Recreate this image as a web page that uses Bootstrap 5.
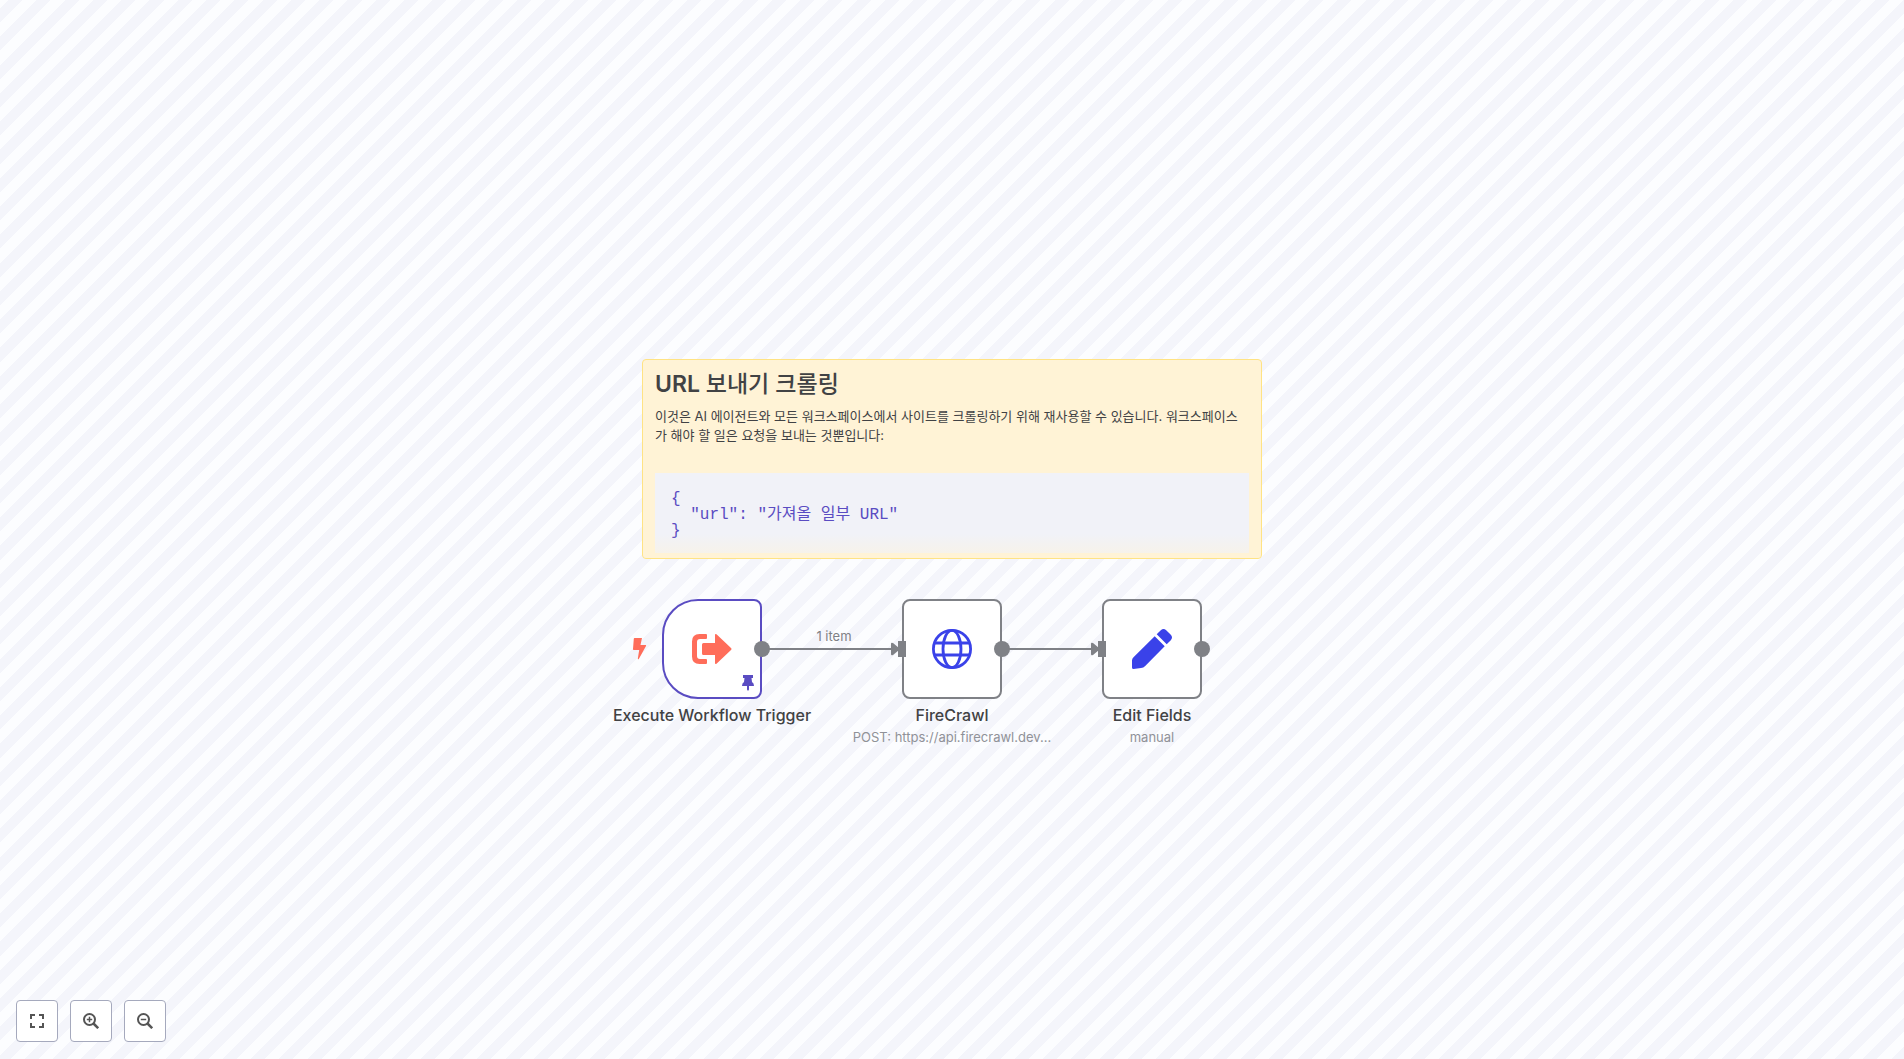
<!DOCTYPE html>
<html lang="ko">
<head>
<meta charset="utf-8">
<meta name="viewport" content="width=device-width, initial-scale=1">
<title>Workflow</title>
<link href="https://cdn.jsdelivr.net/npm/bootstrap@5.3.0/dist/css/bootstrap.min.css" rel="stylesheet">
<style>
  body { font-family: Inter, "Noto Sans CJK KR", sans-serif; color: #414244; }
  .flow-canvas { background: repeating-linear-gradient(135deg, #fcfdff 0 6px, #f4f5fb 6px 16px, #fcfdff 16px 20px); padding-bottom: 1px; }
  .board { width: 620px; height: 340px; }
  .sticky { height: 200px; background: #fff3d6; border: 1px solid #ffe384; border-radius: 4px; padding: 8px 12px 0; }
  .sticky::after { content: ""; position: absolute; inset: auto 0 0 0; height: 24px; background: linear-gradient(180deg, #fff3d600, #fff3d680); }
  .sticky h1 { font-size: 23px; line-height: 32px; font-weight: 600; margin: 0 0 7px; }
  .sticky h1 span { font-weight: 500; }
  .sticky p { font-size: 13px; line-height: 19px; margin: 0 0 28px; word-break: break-all; }
  .sticky pre { height: 80px; margin: 0; padding: 18px 16px 0; background: #f1f2f8; color: #5a4cc2; font: 16px/16px "Liberation Mono", "Noto Sans CJK KR", monospace; overflow: hidden; }
  .flow-node { width: 100px; height: 100px; top: 240px; background: #fff; border: 2px solid #7f8186; border-radius: 8px; }
  .node-trigger { left: 20px; border-color: #5a4cc2; border-radius: 36px 8px 8px 36px; }
  .node-http { left: 260px; }
  .node-edit { left: 460px; }
  .node-text { top: 104px; left: 50%; transform: translateX(-50%); width: 208px; }
  .node-title { font-size: 16px; line-height: 20px; font-weight: 500; }
  .node-sub { font-size: 13px; line-height: 20px; color: #909298; margin-top: 2px; }
  .pin { right: 6px; bottom: 6px; }
  .wires { left: 0; top: 0; overflow: visible; pointer-events: none; }
  .wire-label { left: 120px; width: 144px; top: 267px; font-size: 13px; line-height: 20px; color: #7f8186; }
  .bolt { left: -10px; top: 279px; }
  .canvas-tools { margin: 0 16px 17px; gap: 12px; }
  .tool-btn { width: 42px; height: 42px; border: 1px solid #a5a9bd; border-radius: 4px; background: #fff; color: #555; }
</style>
</head>
<body>
<main class="flow-canvas position-relative vh-100 overflow-hidden d-flex align-items-center justify-content-center">
  <div class="board position-relative">
    <section class="sticky position-relative overflow-hidden">
      <h1>URL <span>보내기 크롤링</span></h1>
      <p>이것은 AI 에이전트와 모든 워크스페이스에서 사이트를 크롤링하기 위해 재사용할 수 있습니다. 워크스페이스<br>가 해야 할 일은 요청을 보내는 것뿐입니다:</p>
      <pre>{
  "url": "가져올 일부 URL"
}</pre>
    </section>

    <svg class="bolt position-absolute" width="15" height="22" viewBox="0 0 15 22" aria-hidden="true"><path fill="#ff6d5a" d="M2.500 0h7.500l-1.500 7H13.700q.7.200.3 1L6.800 21q-.8.800-1-.2L7.200 12H1.700Q.9 12 1 11L1.800.700Q1.900 0 2.500 0Z"/></svg>

    <article class="flow-node node-trigger position-absolute d-flex align-items-center justify-content-center">
      <svg width="40" height="30" viewBox="0 0 40 30" aria-hidden="true"><path fill="#ff6d5a" d="M14 0q1 0 1 1v3q0 1-1 1H8Q5 5 5 8v14q0 3 3 3h6q1 0 1 1v3q0 1-1 1H7.500Q0 30 0 22.500v-15Q0 0 7.500 0ZM24.500.300 39 14q1 1 0 2L24.500 29.700Q23 30.500 23 29v-8H11.500Q10 21 10 19.500v-9Q10 9 11.500 9H23V1q0-1.500 1.500-.7Z"/></svg>
      <svg class="pin position-absolute" width="12" height="16" viewBox="0 0 12 16" aria-hidden="true"><path fill="#5a4cc2" d="M1 0h10v3H9.500l.5 4q2 1 2 4H7v3.500L6 16l-1-1.500V11H0q0-3 2-4l.5-4H1Z"/></svg>
      <div class="node-text position-absolute text-center text-nowrap"><div class="node-title">Execute Workflow Trigger</div></div>
    </article>

    <article class="flow-node node-http position-absolute d-flex align-items-center justify-content-center">
      <svg width="40" height="40" viewBox="0 0 40 40" fill="none" stroke="#3a42e9" stroke-width="2.800" aria-hidden="true"><circle cx="20" cy="20" r="18.600"/><ellipse cx="20" cy="20" rx="9" ry="18.600"/><path d="M2.500 14h35M2.500 26h35"/></svg>
      <div class="node-text position-absolute text-center text-nowrap"><div class="node-title">FireCrawl</div><div class="node-sub">POST: https://api.firecrawl.dev...</div></div>
    </article>

    <article class="flow-node node-edit position-absolute d-flex align-items-center justify-content-center">
      <svg width="40" height="40" viewBox="0 0 40 40" fill="#3a42e9" aria-hidden="true"><path d="M22.700 7.300 32.700 17.300 13.200 37Q11.500 38.800 9 39L1.500 40Q0 40 0 38.500V31.500Q0 29.500 1.500 28.200ZM24.700 5.300 28.800 1.200q2.700-2.400 5.400 0l4.600 4.600q2.400 2.700 0 5.400l-4.100 4.100Z"/></svg>
      <div class="node-text position-absolute text-center"><div class="node-title">Edit Fields</div><div class="node-sub">manual</div></div>
    </article>

    <svg class="wires position-absolute" width="620" height="340" viewBox="0 0 620 340" aria-hidden="true">
      <g fill="#7f8186">
        <path d="M120 289h130v2H120zM360 289h90v2h-90z"/>
        <path d="M249 285q0-2 2-1l6 5q1 1 0 2l-6 5q-2 1-2-1ZM449 285q0-2 2-1l6 5q1 1 0 2l-6 5q-2 1-2-1Z"/>
        <path d="M256 282h8v16h-8zM456 282h8v16h-8z"/>
        <circle cx="120" cy="290" r="8"/><circle cx="360" cy="290" r="8"/><circle cx="560" cy="290" r="8"/>
      </g>
    </svg>
    <div class="wire-label position-absolute text-center">1 item</div>
  </div>

  <div class="canvas-tools position-absolute bottom-0 start-0 d-flex">
    <button type="button" class="tool-btn p-0 d-flex align-items-center justify-content-center" aria-label="Zoom to fit"><svg width="14" height="14" viewBox="0 0 14 14" fill="none" stroke="currentColor" stroke-width="2"><path d="M1 5V1h4M9 1h4v4M13 9v4H9M5 13H1V9"/></svg></button>
    <button type="button" class="tool-btn p-0 d-flex align-items-center justify-content-center" aria-label="Zoom in"><svg width="16" height="16" viewBox="0 0 16 16" fill="none" stroke="currentColor" stroke-width="2"><circle cx="6.500" cy="6.500" r="5.500"/><path d="m10.500 10.500 4.700 4.700" stroke-width="2.500"/><path d="M6.500 3.800v5.400M3.800 6.500h5.400" stroke-width="1.500"/></svg></button>
    <button type="button" class="tool-btn p-0 d-flex align-items-center justify-content-center" aria-label="Zoom out"><svg width="16" height="16" viewBox="0 0 16 16" fill="none" stroke="currentColor" stroke-width="2"><circle cx="6.500" cy="6.500" r="5.500"/><path d="m10.500 10.500 4.700 4.700" stroke-width="2.500"/><path d="M3.800 6.500h5.400" stroke-width="1.500"/></svg></button>
  </div>
</main>
<script src="https://cdn.jsdelivr.net/npm/bootstrap@5.3.0/dist/js/bootstrap.bundle.min.js"></script>
</body>
</html>
